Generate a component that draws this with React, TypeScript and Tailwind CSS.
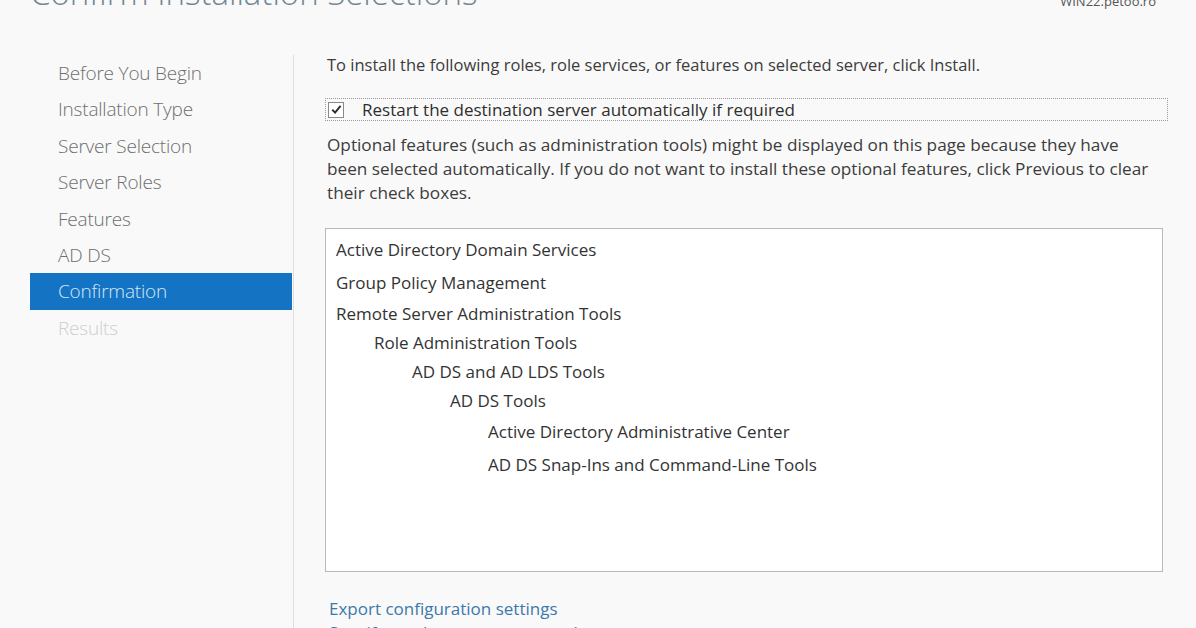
import React from "react";

const steps = [
  "Before You Begin",
  "Installation Type",
  "Server Selection",
  "Server Roles",
  "Features",
  "AD DS",
  "Confirmation",
  "Results",
];

const features = [
  { label: "Active Directory Domain Services", level: 0, h: "h-[33px]" },
  { label: "Group Policy Management", level: 0, h: "h-[33px]" },
  { label: "Remote Server Administration Tools", level: 0, h: "h-[29px]" },
  { label: "Role Administration Tools", level: 1, h: "h-[29px]" },
  { label: "AD DS and AD LDS Tools", level: 2, h: "h-[29px]" },
  { label: "AD DS Tools", level: 3, h: "h-[29px]" },
  { label: "Active Directory Administrative Center", level: 4, h: "h-[33px]" },
  { label: "AD DS Snap-Ins and Command-Line Tools", level: 4, h: "h-[33px]" },
];

const indent = ["pl-[10px]", "pl-[48px]", "pl-[86px]", "pl-[124px]", "pl-[162px]"];

const App: React.FC = () => {
  return (
    <div className="w-[1196px] h-[628px] overflow-hidden bg-[#f9f9f9] font-['Open_Sans',sans-serif] text-[#3c3c3c]">
      <div className="h-[55px] flex justify-between items-start">
        <h1 className="pl-[30px] -mt-[28px] text-[33px] leading-[42px] font-light text-[#6f8797]">
          Confirm Installation Selections
        </h1>
        <div className="pr-[40px] -mt-[7px] text-[13px] leading-[16px] text-[#555]">WIN22.petoo.ro</div>
      </div>

      <div className="flex">
        <nav className="w-[262px] ml-[30px] mr-[1px]">
          {steps.map((s) => {
            const active = s === "Confirmation";
            const done = s === "Results";
            return (
              <div
                key={s}
                className={
                  "h-[36.4px] flex items-center pl-[28px] text-[19px] font-light tracking-[-0.2px] " +
                  (active
                    ? "bg-[#1473c3] text-[#d6e8f7]"
                    : done
                    ? "text-[#cfcfcf]"
                    : "text-[#6e6e6e]")
                }
              >
                {s}
              </div>
            );
          })}
        </nav>
        <div className="w-px h-[600px] bg-[#dedede]" />

        <main className="pl-[31px] text-[16.5px]">
          <p className="pl-[2px] leading-[20px]">
            To install the following roles, role services, or features on selected server, click Install.
          </p>

          <label className="mt-[23px] w-[843px] h-[23px] flex items-center border border-dotted border-[#9a9a9a]">
            <span className="ml-[2px] w-[16px] h-[16px] border border-[#8a8a8a] bg-white flex items-center justify-center">
              <svg viewBox="0 0 16 16" className="w-[13px] h-[13px]">
                <path d="M2.8 8.3 L6.3 11.8 L13 3.6" fill="none" stroke="#2a2a2a" strokeWidth="2.3" />
              </svg>
            </span>
            <span className="ml-[18px] text-[17px] text-[#2e2e2e]">Restart the destination server automatically if required</span>
          </label>

          <p className="mt-[12px] pl-[2px] w-[843px] text-[17.2px] leading-[24px] whitespace-nowrap">
            Optional features (such as administration tools) might be displayed on this page because they have
            <br />
            been selected automatically. If you do not want to install these optional features, click Previous to clear
            <br />
            their check boxes.
          </p>

          <div className="mt-[23px] w-[838px] h-[344px] border border-[#b9b9b9] bg-white pt-[4px]">
            {features.map((f) => (
              <div key={f.label} className={f.h + " flex items-center text-[17px] text-[#333] " + indent[f.level]}>
                {f.label}
              </div>
            ))}
          </div>

          <div className="mt-[27px] pl-[4px] leading-[20px] text-[17px] text-[#3b78ad]">
            <div>Export configuration settings</div>
            <div className="mt-[4px]">Specify an alternate source path</div>
          </div>
        </main>
      </div>
    </div>
  );
};

export default App;
